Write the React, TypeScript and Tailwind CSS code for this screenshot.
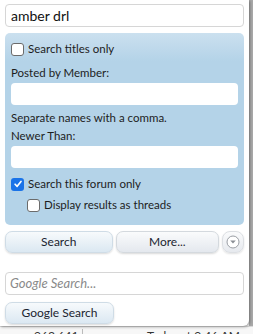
import React from "react";

const font = { fontFamily: "Lato, 'Open Sans', sans-serif" };

function Check({ checked }: { checked?: boolean }) {
  return checked ? (
    <span className="flex h-[13px] w-[13px] items-center justify-center rounded-[3px] bg-[#1a73e8]">
      <svg viewBox="0 0 12 12" className="h-[10px] w-[10px]">
        <path d="M2.5 6.3 L5 8.8 L9.6 3" fill="none" stroke="white" strokeWidth="2" strokeLinecap="round" strokeLinejoin="round" />
      </svg>
    </span>
  ) : (
    <span className="block h-[13px] w-[13px] rounded-[3px] border border-[#6b6b6b] bg-white" />
  );
}

export default function App() {
  return (
    <div className="relative h-[334px] w-[253px] overflow-hidden bg-[#f2f2f2] text-[#222]" style={font}>
      {/* page behind the popup */}
      <div className="absolute left-0 top-[326px] flex h-[8px] w-[253px] border-t border-[#d8d8d8] bg-[#f7f7f7] pt-[2px] text-[12px] leading-[14px] text-[#333]">
        <div className="w-[83px] border-r border-[#bbb] pl-[34px]">963,641</div>
        <div className="pl-[64px]">Today at 9:46 AM</div>
      </div>
      <div className="absolute right-0 top-0 h-[326px] w-[4px] bg-[#a9a9a9]" />

      <div className="relative z-10 flex h-[326px] w-[249px] flex-col rounded-br-[6px] bg-white px-[5px] pt-[4px] shadow-[1px_1px_3px_rgba(0,0,0,0.35)]">
        <div className="flex h-[23px] items-center rounded-[4px] border border-[#d6d6d6] bg-white px-[5px] text-[14px] text-[#111]">
          amber drl
        </div>

        <div className="mt-[6px] flex h-[192px] flex-col rounded-[5px] bg-[linear-gradient(to_bottom,#cbe0ef_0px,#b4d3e8_28px,#b4d3e8_100%)] px-[6px] pt-[9px] text-[11.5px] leading-[14px] text-[#1d1d1d]">
          <label className="flex items-center gap-[4px]">
            <Check />
            <span>Search titles only</span>
          </label>
          <div className="mt-[10px]">Posted by Member:</div>
          <div className="mt-[3px] h-[22px] rounded-[4px] bg-white" />
          <div className="mt-[6px]">Separate names with a comma.</div>
          <div className="mt-[4px]">Newer Than:</div>
          <div className="mt-[3px] h-[22px] rounded-[4px] bg-white" />
          <label className="mt-[9px] flex items-center gap-[4px]">
            <Check checked />
            <span>Search this forum only</span>
          </label>
          <label className="ml-[16px] mt-[7px] flex items-center gap-[4px]">
            <Check />
            <span>Display results as threads</span>
          </label>
        </div>

        <div className="mt-[6px] flex items-center gap-[3px]">
          <button className="h-[22px] w-[108px] rounded-[7px] border border-[#cfdce6] bg-[linear-gradient(to_bottom,#f7fafc,#dbe8f2)] text-[12px] text-[#1b2430] shadow-[0_1px_2px_rgba(0,0,0,0.15)]">
            Search
          </button>
          <button className="h-[22px] w-[104px] rounded-[7px] border border-[#d4d9de] bg-[linear-gradient(to_bottom,#fafbfc,#e4e8ee)] text-[12px] text-[#1b2430] shadow-[0_1px_2px_rgba(0,0,0,0.15)]">
            More...
          </button>
          <button className="flex h-[22px] w-[22px] items-center justify-center rounded-[8px] border border-[#dcdfe3] bg-[linear-gradient(to_bottom,#fafbfc,#e6e9ee)] shadow-[0_1px_2px_rgba(0,0,0,0.12)]">
            <svg viewBox="0 0 14 14" className="h-[14px] w-[14px]">
              <circle cx="7" cy="7" r="6" fill="white" stroke="#9a9ea4" strokeWidth="1" />
              <path d="M4.2 5.6 L9.8 5.6 L7 8.6 Z" fill="#8a8e94" />
            </svg>
          </button>
        </div>

        <div className="mt-[19px] flex h-[23px] items-center rounded-[4px] border border-[#d6d6d6] bg-white px-[4px] text-[13px] italic text-[#8a8a8a]">
          Google Search...
        </div>
        <button className="mt-[7px] h-[22px] w-[109px] rounded-[7px] border border-[#cfdce6] bg-[linear-gradient(to_bottom,#f7fafc,#dbe8f2)] text-[12px] text-[#1b2430] shadow-[0_1px_2px_rgba(0,0,0,0.15)]">
          Google Search
        </button>
      </div>
    </div>
  );
}
